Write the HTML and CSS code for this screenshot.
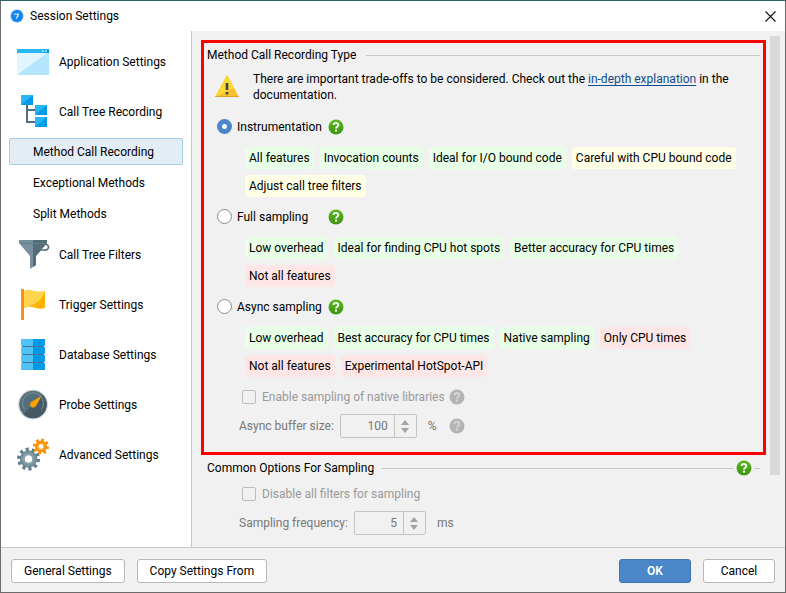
FILE: index.html
```html
<!DOCTYPE html>
<html lang="en">
<head>
<meta charset="utf-8">
<title>Session Settings</title>
<link rel="stylesheet" href="styles.css">
</head>
<body>
<svg class="defs" aria-hidden="true">
  <defs>
    <linearGradient id="green" x1="0" y1="0" x2="0" y2="1"><stop offset="0" stop-color="#5cb81f"/><stop offset="1" stop-color="#3c9410"/></linearGradient>
    <symbol id="help" viewBox="0 0 16 16">
      <circle cx="8" cy="8" r="7.5"/>
      <path d="M5.6 6.1C5.6 3.2 10.3 3.2 10.3 6C10.3 7.7 8 7.6 8 9.5" fill="none" stroke="currentColor" stroke-width="1.9"/>
      <rect x="7" y="10.6" width="2" height="2" fill="currentColor"/>
    </symbol>
  </defs>
</svg>
<div class="window">
  <header class="titlebar">
    <svg class="app-icon" viewBox="0 0 14 14"><circle cx="7" cy="7" r="6.8" fill="#a9c4df"/><circle cx="7" cy="7" r="5.9" fill="#0d86f5"/><path d="M4 5.200H8.500L6.200 9.800M8.500 5L7.600 8" fill="none" stroke="#d4eaff" stroke-width="1.200"/></svg>
    <h1 class="title">Session Settings</h1>
    <button class="close" aria-label="Close"><svg viewBox="0 0 11 11"><path d="M.5 .5L10.5 10.5M10.5 .5L.5 10.5" stroke="#111" stroke-width="1.1"/></svg></button>
  </header>
  <div class="body">
    <nav class="sidebar">
      <a class="item" href="#"><svg viewBox="0 0 32 32"><path d="M0 3H32V29H0Z" fill="#b3e5fc"/><path d="M0 7H30L0 29Z" fill="#e1f5fe"/><path d="M0 3H32V7H0Z" fill="#29b6f6"/><path d="M32 3V7H24Z" fill="#039be5"/><path d="M25 4.500H27V6H25ZM28 4.500H30V6H28Z" fill="#b3e5fc"/></svg>Application Settings</a>
      <a class="item" href="#"><svg viewBox="0 0 32 32"><path d="M10 9V26H19M10 14H19" fill="none" stroke="#546e7a" stroke-width="2"/><path d="M4 -1H16V9H4ZM18 9H30V19H18ZM18 21H30V31H18Z" fill="#29b6f6"/><path d="M16 -1V9H4ZM30 9V19H18ZM30 21V31H18Z" fill="#039be5"/></svg>Call Tree Recording</a>
      <a class="subitem selected" href="#" aria-current="page">Method Call Recording</a>
      <a class="subitem" href="#">Exceptional Methods</a>
      <a class="subitem" href="#">Split Methods</a>
      <a class="item" href="#"><svg viewBox="0 0 32 32"><path d="M23 8L27 5.500C33 4 33 12 27 11L24 11" fill="none" stroke="#546e7a" stroke-width="1.600"/><path d="M2 1H30V4L19 17V26L13 30V17L2 4Z" fill="#78909c"/><path d="M16 1H30V4L19 17V26L16 28Z" fill="#546e7a"/><path d="M3 4.500H29" stroke="#607d8b" stroke-width="1"/></svg>Call Tree Filters</a>
      <a class="item" href="#"><svg viewBox="0 0 32 32"><path d="M4 0H7V31H4Z" fill="#fb8c1e"/><path d="M7 2C14 -1 19 5 28 2V19C20 22 15 15 7 19Z" fill="#ffb300"/><path d="M7 2C14 -1 19 5 28 2C25 11 17 17 7 19Z" fill="#ffd54f"/></svg>Trigger Settings</a>
      <a class="item" href="#"><svg viewBox="0 0 32 32"><path d="M4 0H28V31H4Z" fill="#4fc3f7"/><path d="M16 0H28V31H16Z" fill="#039be5"/><path d="M5 7.500H27M5 15.500H27M5 23.500H27" stroke="#47738e"/><path d="M4 6V9L5 7.500ZM4 14V17L5 15.500ZM4 22V25L5 23.500ZM28 6V9L27 7.500ZM28 14V17L27 15.500ZM28 22V25L27 23.500Z" fill="#fff"/></svg>Database Settings</a>
      <a class="item" href="#"><svg viewBox="0 0 32 32"><circle cx="16" cy="15.500" r="15" fill="#cfd8dc"/><circle cx="16" cy="15.500" r="13.700" fill="#546e7a"/><path d="M25.700 5.800A13.700 13.700 0 0 1 6.300 25.200Z" fill="#455a64"/><path d="M7.500 20.500A10.500 10.500 0 1 1 24.500 20.500" fill="none" stroke="#78909c"/><path d="M24.500 7L19 17A3.200 3.200 0 1 1 14.500 12.700Z" fill="#ffa000"/></svg>Probe Settings</a>
      <a class="item" href="#"><svg viewBox="0 0 32 32"><circle cx="11.500" cy="20" r="6.300" fill="none" stroke="#78909c" stroke-width="5"/><circle cx="11.500" cy="20" r="9.700" fill="none" stroke="#607d8b" stroke-width="3.600" stroke-dasharray="3 3.095"/><circle cx="11.500" cy="20" r="5" fill="none" stroke="#90a4ae" stroke-width="1.500"/><circle cx="24" cy="7.500" r="4.200" fill="none" stroke="#fb8c00" stroke-width="3.400"/><circle cx="24" cy="7.500" r="6.700" fill="none" stroke="#fb8c00" stroke-width="2.600" stroke-dasharray="2.600 2.662"/><circle cx="24" cy="7.500" r="3.400" fill="none" stroke="#ffa726" stroke-width="1.200"/></svg>Advanced Settings</a>
    </nav>
    <main class="content">
      <div class="sections">
        <section class="section highlighted">
          <h2 class="heading">Method Call Recording Type</h2>
          <div class="notice">
            <svg viewBox="0 0 24 22"><path d="M12 0L24 22H0Z" fill="#fbc02d"/><path d="M12 0L0 22L19 12.500Z" fill="#fdd835"/><path d="M.5 21.500H23.500" stroke="#e0a020"/><path d="M10.700 8H13.300V15H10.700ZM10.700 17H13.300V19.500H10.700Z" fill="#37474f"/></svg>
            <p>There are important trade-offs to be considered. Check out the <a href="#">in-depth explanation</a> in the documentation.</p>
          </div>
          <div class="option">
            <label><input type="radio" name="type" checked><span>Instrumentation</span></label>
            <svg class="help"><use href="#help"/></svg>
          </div>
          <ul class="tags">
            <li class="good">All features</li><li class="good">Invocation counts</li><li class="good">Ideal for I/O bound code</li><li class="warn">Careful with CPU bound code</li><li class="warn">Adjust call tree filters</li>
          </ul>
          <div class="option">
            <label><input type="radio" name="type"><span>Full sampling</span></label>
            <svg class="help"><use href="#help"/></svg>
          </div>
          <ul class="tags">
            <li class="good">Low overhead</li><li class="good">Ideal for finding CPU hot spots</li><li class="good">Better accuracy for CPU times</li><li class="bad">Not all features</li>
          </ul>
          <div class="option">
            <label><input type="radio" name="type"><span>Async sampling</span></label>
            <svg class="help"><use href="#help"/></svg>
          </div>
          <ul class="tags">
            <li class="good">Low overhead</li><li class="good">Best accuracy for CPU times</li><li class="good">Native sampling</li><li class="bad">Only CPU times</li><li class="bad">Not all features</li><li class="bad">Experimental HotSpot-API</li>
          </ul>
          <div class="check">
            <label><input type="checkbox" disabled>Enable sampling of native libraries</label>
            <svg class="help off"><use href="#help"/></svg>
          </div>
          <div class="field">
            <label for="buffer">Async buffer size:</label>
            <span class="spinner"><input id="buffer" class="wide" type="text" value="100" disabled><span class="arrows"><i class="up"></i><i class="down"></i></span></span>
            <span class="unit">%</span>
            <svg class="help off"><use href="#help"/></svg>
          </div>
        </section>
        <section class="section">
          <div class="heading with-help"><h2>Common Options For Sampling</h2><span class="rule"></span><svg class="help"><use href="#help"/></svg><span class="rule short"></span></div>
          <div class="check">
            <label><input type="checkbox" disabled>Disable all filters for sampling</label>
          </div>
          <div class="field">
            <label for="freq">Sampling frequency:</label>
            <span class="spinner"><input id="freq" type="text" value="5" disabled><span class="arrows"><i class="up"></i><i class="down"></i></span></span>
            <span class="unit">ms</span>
          </div>
        </section>
      </div>
      <div class="scrollbar"><div class="thumb"></div></div>
    </main>
  </div>
  <footer class="footer">
    <button class="btn">General Settings</button>
    <button class="btn">Copy Settings From</button>
    <span class="spacer"></span>
    <button class="btn primary">OK</button>
    <button class="btn">Cancel</button>
  </footer>
</div>
</body>
</html>
```
FILE: styles.css
```css
* { box-sizing: border-box; }
body { margin: 0; font: 12px/16px Roboto, "Open Sans", sans-serif; color: #000; }
h1, h2, p, ul { margin: 0; padding: 0; font-size: inherit; font-weight: 400; }
button, input { font: inherit; color: inherit; }
svg { display: block; flex: none; overflow: visible; }
.defs { position: absolute; width: 0; height: 0; }
.window { min-height: 100vh; display: flex; flex-direction: column; border: 1px solid #6b6b6b; border-top-color: #2f6468; background: #f1f1f1; }

.titlebar { height: 30px; display: flex; align-items: center; padding: 0 9px; background: #fff; }
.app-icon { width: 14px; height: 14px; }
.title { margin-left: 6px; flex: 1; }
.close { border: 0; padding: 0; background: none; }
.close svg { width: 11px; height: 11px; }

.body { flex: 1; display: flex; }
.sidebar { width: 191px; flex: none; padding-top: 6px; background: #fff; border-right: 1px solid #c8c8c8; }
.sidebar a { color: inherit; text-decoration: none; display: flex; align-items: center; }
.item { height: 50px; padding-left: 16px; gap: 10px; }
.item svg { width: 32px; height: 32px; }
.subitem { height: 27px; margin: 4px 8px; padding-left: 23px; border: 1px solid transparent; border-radius: 2px; }
.selected { background: #e3edf6; border-color: #a6cde6; margin-top: 1px; }
.subitem + .item { margin-top: -1px; }

.content { flex: 1; display: flex; padding: 5px 5px 0 9px; }
.sections { flex: 1; padding-top: 4px; min-width: 0; }
.section { padding: 0 6px; }
.highlighted { border: 3px solid #f00; padding: 3px 3px 12px; }
.heading { display: flex; align-items: center; gap: 10px; height: 18px; }
h2.heading::after { content: ""; flex: 1; height: 1px; background: #c8c8c8; }
.rule { flex: 1; height: 1px; background: #c8c8c8; }
.rule.short { flex: 0 0 6px; }
.with-help { gap: 2px; margin-top: 4px; }
.with-help h2 { margin-right: 6px; }
.notice { display: flex; gap: 14px; padding: 7px 24px 7px 8px; }
.notice svg { width: 24px; height: 22px; margin-top: 4px; }
.notice a { color: #0f4c91; text-underline-offset: 2px; }
.help { width: 16px; height: 16px; fill: url(#green); color: #fff; }
.off { fill: #b4b4b4; color: #d6d6d6; }
.option { display: flex; align-items: center; height: 33px; padding-left: 10px; }
.option label { display: flex; align-items: center; gap: 5px; width: 111px; }
input[type="radio"] { appearance: none; width: 15px; height: 15px; margin: 0; border: 1px solid #8c8c8c; border-radius: 50%; background: #fff; }
input[type="radio"]:checked { border: 5px solid #4a86c8; }
.tags { list-style: none; display: flex; flex-wrap: wrap; gap: 6px; padding: 4px 0 3px 38px; }
.tags li { padding: 3px 4px; border-radius: 3px; }
.good { background: #e6ffe6; }
.warn { background: #ffffe6; }
.bad { background: #ffe6e6; }
.check { display: flex; align-items: center; gap: 4px; height: 30px; margin-top: 2px; padding-left: 35px; color: #999; }
.check label { display: flex; align-items: center; gap: 6px; }
input[type="checkbox"] { appearance: none; width: 14px; height: 14px; margin: 0; border: 1px solid #bdbdbd; border-radius: 2px; }
.field { display: flex; align-items: center; height: 28px; padding-left: 32px; color: #777; }
.spinner { display: flex; height: 24px; margin: 0 11px 0 6px; border: 1px solid #c4c4c4; border-radius: 2px; }
.spinner input { width: 48px; border: 0; padding: 0 6px; background: none; text-align: right; }
.spinner .wide { width: 53px; }
.arrows { width: 22px; border-left: 1px solid #c4c4c4; display: flex; flex-direction: column; align-items: center; justify-content: center; gap: 3px; }
.up, .down { border: 4px solid transparent; border-top-width: 0; border-bottom: 5px solid #a3a3a3; }
.down { border-top: 5px solid #a3a3a3; border-bottom-width: 0; }
.unit { margin-right: 12px; }
.scrollbar { width: 10px; margin-left: 4px; }
.thumb { height: 86%; background: #d9d9d9; }

.footer { display: flex; align-items: center; gap: 12px; height: 45px; padding: 1px 10px 0; border-top: 1px solid #c8c8c8; }
.btn { height: 24px; padding: 0 12px; min-width: 72px; background: #fff; border: 1px solid #b8b8b8; border-radius: 3px; }
.primary { background: #4a86c8; border-color: #3d75b5; color: #fff; font-weight: 600; }
.spacer { flex: 1; }
```
